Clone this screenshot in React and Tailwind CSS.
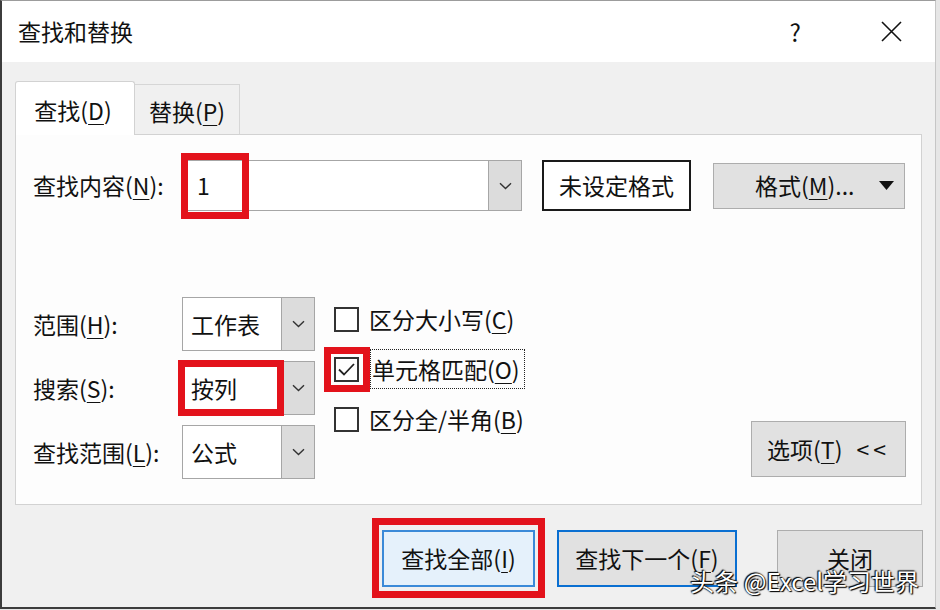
import React from 'react';

const Chevron = () => (
  <svg width="13" height="8" viewBox="0 0 13 8" fill="none">
    <path d="M1 1.2 L6.5 6.6 L12 1.2" stroke="#333" strokeWidth="1.4" />
  </svg>
);

const Key = ({ children }) => (
  <span className="underline decoration-1 underline-offset-[4px]">{children}</span>
);

const Combo = ({ value, className = '' }) => (
  <div className={`flex border border-[#a6a6a6] bg-white ${className}`}>
    <div className="flex-1 flex items-center pl-[8px]">{value}</div>
    <div className="w-[33px] flex items-center justify-center bg-[#dcdcdc] border-l border-[#a6a6a6]">
      <Chevron />
    </div>
  </div>
);

const Box = ({ checked }) => (
  <div className="w-[25px] h-[25px] border-2 border-[#333] bg-white flex items-center justify-center">
    {checked && (
      <svg width="19" height="15" viewBox="0 0 19 15" fill="none">
        <path d="M2 7.5 L7 12.5 L17 2" stroke="#222" strokeWidth="1.8" />
      </svg>
    )}
  </div>
);

const Highlight = ({ className }) => (
  <div className={`absolute border-[7px] border-[#e3121b] pointer-events-none ${className}`}></div>
);

export default function App() {
  return (
    <div className="w-[940px] h-[610px] bg-[#e6e6e6] font-['Noto_Sans_CJK_SC',sans-serif] text-[#111] text-[23px] leading-none">
      <div className="relative w-[936px] h-[609px] flex flex-col bg-[#f0f0f0] border-t border-l-2 border-b-2 border-r border-t-[#9c9c9c] border-l-[#3c3c3c] border-b-[#3c3c3c] border-r-[#c6c6c6]">
        {/* Title bar */}
        <div className="h-[61px] bg-white flex items-center pl-[16px] shrink-0">
          <span className="text-[23px]">查找和替换</span>
          <span className="ml-auto text-[24px] mr-[80px]">?</span>
          <svg className="mr-[33px]" width="21" height="21" viewBox="0 0 21 21" fill="none">
            <path d="M1 1 L20 20 M20 1 L1 20" stroke="#111" strokeWidth="1.6" />
          </svg>
        </div>

        {/* Tabs */}
        <div className="flex items-end pl-[13px] pt-[19px] shrink-0">
          <div className="relative z-10 w-[120px] h-[54px] -mb-px bg-white border border-b-0 border-[#d2d2d2] rounded-t-[3px] flex items-center justify-center pt-[4px] pr-[4px]">
            查找(<Key>D</Key>)
          </div>
          <div className="w-[105px] h-[50px] bg-[#f0f0f0] border border-l-0 border-b-0 border-[#d6d6d6] flex items-center justify-center pt-[4px]">
            替换(<Key>P</Key>)
          </div>
        </div>

        {/* Panel */}
        <div className="ml-[13px] w-[907px] h-[371px] bg-[#fdfdfd] border border-[#d2d2d2] flex flex-col shrink-0">
          <div className="flex items-center mt-[25px] h-[51px]">
            <div className="w-[166px] pl-[17px] whitespace-nowrap">查找内容(<Key>N</Key>):</div>
            <div className="relative">
              <Combo value="1" className="w-[340px] h-[51px] pl-[6px]" />
              <Highlight className="left-[-1px] top-[-7px] w-[68px] h-[66px]" />
            </div>
            <div className="ml-[20px] w-[149px] h-[51px] border-2 border-[#1a1a1a] bg-white flex items-center justify-center">
              未设定格式
            </div>
            <div className="ml-[22px] w-[192px] h-[46px] border border-[#adadad] bg-[#e1e1e1] flex items-center pl-[41px] pr-[10px]">
              <span>格式(<Key>M</Key>)...</span>
              <svg className="ml-auto" width="15" height="9" viewBox="0 0 15 9">
                <path d="M0 0 H15 L7.5 9 Z" fill="#111" />
              </svg>
            </div>
          </div>

          <div className="flex mt-[86px]">
            <div className="flex flex-col gap-[10px]">
              {[
                { label: <>范围(<Key>H</Key>):</>, value: '工作表' },
                { label: <>搜索(<Key>S</Key>):</>, value: '按列', mark: true },
                { label: <>查找范围(<Key>L</Key>):</>, value: '公式' },
              ].map((row, i) => (
                <div key={i} className="flex items-center h-[54px]">
                  <div className="w-[166px] pl-[17px] whitespace-nowrap">{row.label}</div>
                  <div className="relative">
                    <Combo value={row.value} className="w-[133px] h-[54px]" />
                    {row.mark && <Highlight className="left-[-4px] top-[-1px] w-[106px] h-[56px]" />}
                  </div>
                </div>
              ))}
            </div>

            <div className="flex flex-col gap-[6px] ml-[19px]">
              <div className="flex items-center h-[44px]">
                <Box />
                <span className="ml-[10px]">区分大小写(<Key>C</Key>)</span>
              </div>
              <div className="flex items-center h-[44px]">
                <div className="relative">
                  <Box checked />
                  <Highlight className="left-[-10px] top-[-10px] w-[46px] h-[45px]" />
                </div>
                <span className="ml-[11px] h-[40px] flex items-center pl-[1px] pr-[4px] border border-dotted border-[#222]">
                  单元格匹配(<Key>O</Key>)
                </span>
              </div>
              <div className="flex items-center h-[44px]">
                <Box />
                <span className="ml-[10px]">区分全/半角(<Key>B</Key>)</span>
              </div>
            </div>

            <div className="ml-auto self-end mb-[2px] mr-[15px] w-[155px] h-[56px] border border-[#adadad] bg-[#e1e1e1] flex items-center justify-center">
              选项(<Key>T</Key>)<span className="ml-[14px] tracking-[4px]">&lt;&lt;</span>
            </div>
          </div>
        </div>

        {/* Bottom buttons */}
        <div className="flex pt-[25px] pl-[380px]">
          <div className="relative">
            <div className="w-[153px] h-[57px] border-2 border-[#3b8ad8] bg-[#e5f1fb] flex items-center justify-center">
              查找全部(<Key>I</Key>)
            </div>
            <Highlight className="left-[-10px] top-[-12px] w-[173px] h-[80px]" />
          </div>
          <div className="ml-[22px] w-[180px] h-[57px] border-2 border-[#0a6fd1] bg-[#e1e1e1] flex items-center justify-center">
            查找下一个(<Key>F</Key>)
          </div>
          <div className="ml-[40px] w-[146px] h-[57px] border border-[#adadad] bg-[#e1e1e1] flex items-center justify-center">
            关闭
          </div>
        </div>

        <div className="absolute right-[16px] bottom-[14px] text-white text-[24px] [text-shadow:0_0_2px_#000,1px_1px_1px_#000,-1px_-1px_1px_#000]">
          头条 @Excel学习世界
        </div>
      </div>
    </div>
  );
}
